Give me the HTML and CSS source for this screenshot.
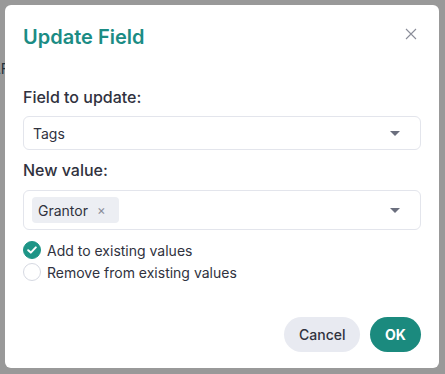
FILE: index.html
```html
<!DOCTYPE html>
<html lang="en">
<head>
  <meta charset="UTF-8" />
  <meta name="viewport" content="width=device-width, initial-scale=1.0"/>
  <title>Update Field</title>
  <link rel="stylesheet" href="styles.css">
</head>
<body>
  <span class="behind">AF</span>

  <div class="dialog">
    <div class="dialog-head">
      <h2>Update Field</h2>
      <button class="close" aria-label="Close">
        <svg width="12" height="12" viewBox="0 0 12 12"><path d="M1 1L11 11M11 1L1 11" stroke="#8a8d99" stroke-width="1.1" fill="none"/></svg>
      </button>
    </div>

    <label class="label">Field to update:</label>
    <div class="select">
      <span class="value">Tags</span>
      <span class="caret"></span>
    </div>

    <label class="label">New value:</label>
    <div class="select multi">
      <span class="chip">Grantor <span class="chip-x">×</span></span>
      <span class="caret"></span>
    </div>

    <div class="options">
      <div class="option">
        <span class="radio checked">
          <svg width="10" height="8" viewBox="0 0 10 8"><path d="M1.2 4.2L3.8 6.6L8.8 1.4" stroke="#fff" stroke-width="2" fill="none" stroke-linecap="round" stroke-linejoin="round"/></svg>
        </span>
        Add to existing values
      </div>
      <div class="option">
        <span class="radio"></span>
        Remove from existing values
      </div>
    </div>

    <div class="actions">
      <button class="btn cancel">Cancel</button>
      <button class="btn ok">OK</button>
    </div>
  </div>
</body>
</html>
```

FILE: styles.css
```css
body {
  font-family: 'Inter', 'Noto Sans', sans-serif;
  background-color: #999999;
  color: #30323e;
  margin: 0;
  padding: 5px;
  width: 445px;
  height: 374px;
  box-sizing: border-box;
  overflow: hidden;
  position: relative;
}
.behind {
  position: absolute;
  left: -9px;
  top: 60px;
  font-size: 14px;
  color: #22303c;
}
.dialog {
  position: relative;
  width: 434px;
  height: 363px;
  box-sizing: border-box;
  background-color: #fff;
  border-radius: 6px;
  padding: 20px 18px 16px 18px;
  display: flex;
  flex-direction: column;
}
.dialog-head { display: flex; justify-content: space-between; align-items: flex-start; }
.dialog-head h2 {
  margin: 0;
  font-size: 20px;
  line-height: 24px;
  font-weight: 600;
  color: #1b8c84;
}
.close {
  border: none;
  background: none;
  padding: 0;
  margin: 3px 4px 0 0;
  width: 12px;
  height: 12px;
  display: flex;
  cursor: pointer;
}
.label {
  display: block;
  font-size: 16px;
  line-height: 20px;
  font-weight: 500;
  margin-top: 38px;
  margin-bottom: 9px;
}
.label + .select { margin-bottom: 10px; }
.select + .label { margin-top: 0; }
.select {
  display: flex;
  align-items: center;
  justify-content: space-between;
  height: 34px;
  box-sizing: border-box;
  border: 1px solid #e3e5ec;
  border-radius: 6px;
  padding: 0 20px 0 9px;
  font-size: 14px;
}
.select.multi { height: 40px; padding-left: 8px; margin-top: 1px; }
.caret {
  width: 0;
  height: 0;
  border-left: 5px solid transparent;
  border-right: 5px solid transparent;
  border-top: 5px solid #6b6f7e;
}
.chip {
  display: flex;
  align-items: center;
  gap: 9px;
  height: 26px;
  padding: 0 13px 0 6px;
  background-color: #eceef3;
  border-radius: 4px;
}
.chip-x { font-size: 13px; color: #8a8d99; }
.options { display: flex; flex-direction: column; gap: 4px; margin-top: 1px; }
.option {
  display: flex;
  align-items: center;
  gap: 6px;
  height: 18px;
  font-size: 14px;
}
.radio {
  width: 18px;
  height: 18px;
  box-sizing: border-box;
  border-radius: 50%;
  border: 1px solid #d6d9e2;
  display: flex;
  align-items: center;
  justify-content: center;
}
.radio.checked { background-color: #1e9587; border-color: #1e9587; }
.actions { margin-top: auto; display: flex; justify-content: flex-end; gap: 10px; }
.btn {
  height: 35px;
  border: none;
  border-radius: 18px;
  font-family: inherit;
  font-size: 14px;
  font-weight: 500;
  padding: 0 15px;
  cursor: pointer;
}
.cancel { background-color: #e8eaf1; color: #30323e; width: 76px; }
.ok { background-color: #1b8a7e; color: #fff; font-weight: 700; width: 51px; }
```
